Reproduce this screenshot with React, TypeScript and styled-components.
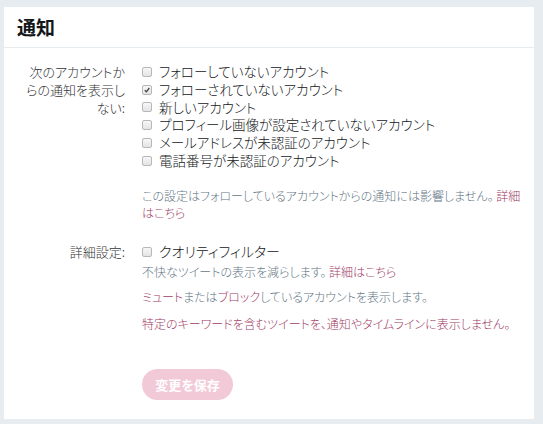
import React from "react";
import styled, { createGlobalStyle } from "styled-components";

const GlobalStyle = createGlobalStyle`
  body {
    margin: 0;
    background: #e6ecf0;
    font-family: "Noto Sans CJK JP", "Noto Sans", sans-serif;
    font-feature-settings: "palt";
    color: #14171a;
  }
`;

const Page = styled.div`
  padding: 7px 9px 5px 4px;
`;

const Card = styled.div`
  background: #fff;
  height: 412px;
  box-sizing: border-box;
`;

const Header = styled.div`
  height: 41px;
  box-sizing: border-box;
  border-bottom: 1px solid #e6ecf0;
  padding: 8px 0 0 13px;
`;

const Title = styled.h1`
  margin: 0;
  font-size: 19px;
  font-weight: 700;
  line-height: 24px;
  color: #14171a;
`;

const Body = styled.div`
  padding: 15px 12px 18px 0;
`;

const Row = styled.div<{ $top?: number }>`
  display: grid;
  grid-template-columns: 121px 1fr;
  column-gap: 17px;
  margin-top: ${(p) => p.$top ?? 0}px;
`;

const Label = styled.div`
  justify-self: end;
  width: 104px;
  text-align: right;
  font-size: 13px;
  line-height: 17.8px;
  font-weight: 300;
  color: #333;
`;

const Options = styled.div`
  display: flex;
  flex-direction: column;
`;

const Option = styled.label<{ $size?: number }>`
  display: flex;
  align-items: center;
  gap: 6px;
  font-size: ${(p) => p.$size ?? 13.5}px;
  line-height: 17.8px;
  font-weight: 300;
  color: #14171a;
`;

const Box = styled.span`
  width: 8px;
  height: 8px;
  border: 1px solid #b8b8b8;
  border-radius: 2px;
  background: linear-gradient(#f7f7f7, #e4e4e4);
  display: flex;
  align-items: center;
  justify-content: center;
  flex-shrink: 0;
  margin-right: 1px;
`;

const Help = styled.p<{ $top?: number }>`
  margin: ${(p) => p.$top ?? 0}px 0 0;
  font-size: 12px;
  line-height: 17px;
  font-weight: 300;
  color: #657786;
`;

const Link = styled.a`
  color: #a03b66;
  text-decoration: none;
`;

const SaveButton = styled.button`
  margin-top: 37px;
  width: 91px;
  height: 31px;
  border: none;
  border-radius: 16px;
  background: #f2c9d7;
  color: #fff;
  font-family: inherit;
  font-feature-settings: "palt";
  font-size: 13px;
  font-weight: 700;
  padding: 0;
`;

function Check({ checked }: { checked?: boolean }) {
  return (
    <Box>
      {checked && (
        <svg width="6" height="6" viewBox="0 0 6 6">
          <path d="M0.8 3.2 L2.4 4.8 L5.3 1" fill="none" stroke="#444" strokeWidth="1.3" />
        </svg>
      )}
    </Box>
  );
}

const filters = [
  { text: "フォローしていないアカウント" },
  { text: "フォローされていないアカウント", checked: true },
  { text: "新しいアカウント" },
  { text: "プロフィール画像が設定されていないアカウント" },
  { text: "メールアドレスが未認証のアカウント" },
  { text: "電話番号が未認証のアカウント" },
];

export default function App() {
  return (
    <Page>
      <GlobalStyle />
      <Card>
        <Header>
          <Title>通知</Title>
        </Header>
        <Body>
          <Row>
            <Label>次のアカウントからの通知を表示しない:</Label>
            <div>
              <Options>
                {filters.map((f) => (
                  <Option key={f.text}>
                    <Check checked={f.checked} />
                    {f.text}
                  </Option>
                ))}
              </Options>
              <Help $top={17}>
                この設定はフォローしているアカウントからの通知には影響しません。 <Link href="#">詳細はこちら</Link>
              </Help>
            </div>
          </Row>
          <Row $top={22}>
            <Label>詳細設定:</Label>
            <div>
              <Option $size={14}>
                <Check />
                クオリティフィルター
              </Option>
              <Help $top={2}>
                不快なツイートの表示を減らします。 <Link href="#">詳細はこちら</Link>
              </Help>
              <Help $top={8}>
                <Link href="#">ミュート</Link>または<Link href="#">ブロック</Link>しているアカウントを表示します。
              </Help>
              <Help $top={10}>
                <Link href="#">特定のキーワードを含むツイートを、通知やタイムラインに表示しません。</Link>
              </Help>
              <SaveButton disabled>変更を保存</SaveButton>
            </div>
          </Row>
        </Body>
      </Card>
    </Page>
  );
}
